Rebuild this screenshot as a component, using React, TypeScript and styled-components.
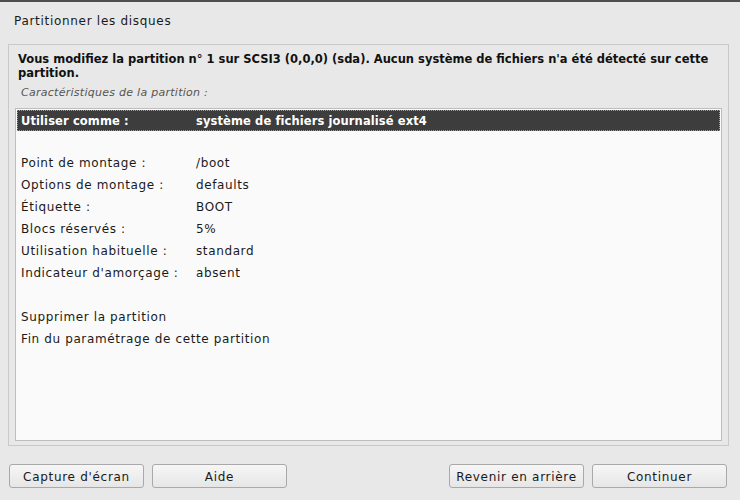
import React from "react";
import styled, { createGlobalStyle } from "styled-components";

const Global = createGlobalStyle`
  html, body { margin: 0; padding: 0; }
  body {
    background: #e8e8e8;
    font-family: "DejaVu Sans", "Liberation Sans", sans-serif;
    font-size: 12px;
    color: #1a1a1a;
  }
`;

const Screen = styled.div`
  width: 740px;
  height: 500px;
  box-sizing: border-box;
  border-top: 2px solid #4e4e4e;
  display: flex;
  flex-direction: column;
  background: #e8e8e8;
`;

const Title = styled.div`
  height: 42px;
  box-sizing: border-box;
  padding: 12px 0 0 14px;
  line-height: 14px;
  letter-spacing: 0.7px;
`;

const Frame = styled.div`
  margin: 0 11px 0 8px;
  height: 402px;
  box-sizing: border-box;
  border: 1px solid #c9c9c9;
  padding: 7px 6px 4px 6px;
  display: flex;
  flex-direction: column;
`;

const Message = styled.div`
  font-weight: bold;
  font-size: 11.5px;
  letter-spacing: 0px;
  line-height: 14px;
  padding-left: 3px;
  color: #111;
`;

const Caption = styled.div`
  font-style: italic;
  font-size: 11px;
  letter-spacing: 0.27px;
  color: #555;
  padding: 6px 0 0 6px;
  line-height: 14px;
  height: 14px;
  margin-bottom: 8px;
`;

const List = styled.div`
  flex: 1;
  background: #fafafa;
  border: 1px solid #bdbdbd;
  padding: 1px;
  display: flex;
  flex-direction: column;
`;

const Row = styled.div<{ $selected?: boolean; $h?: number }>`
  height: ${(p) => p.$h ?? 22}px;
  flex: none;
  box-sizing: border-box;
  display: flex;
  align-items: center;
  padding-left: 3px;
  background: ${(p) => (p.$selected ? "#3d3d3d" : "transparent")};
  color: ${(p) => (p.$selected ? "#ffffff" : "#1a1a1a")};
  font-weight: ${(p) => (p.$selected ? "bold" : "normal")};
  font-size: ${(p) => (p.$selected ? "11.5px" : "12px")};
  letter-spacing: ${(p) => (p.$selected ? "0.1px" : "0.62px")};
  border: 1px dotted ${(p) => (p.$selected ? "#9a9a9a" : "transparent")};
`;

const Label = styled.span`
  width: 175px;
  flex: none;
`;

const Value = styled.span``;

const ButtonBar = styled.div`
  display: flex;
  align-items: center;
  padding: 18px 13px 0 9px;
  gap: 8px;
`;

const Spacer = styled.div`
  flex: 1;
`;

const Button = styled.button`
  width: 135px;
  height: 24px;
  box-sizing: border-box;
  border: 1px solid #a9a9a9;
  border-radius: 3px;
  background: linear-gradient(#f6f6f6, #e6e6e6);
  font-family: "DejaVu Sans", "Liberation Sans", sans-serif;
  font-size: 12px;
  color: #1a1a1a;
  padding: 1px 0 0 0;
  letter-spacing: 0.7px;
`;

const rows: Array<[string, string] | null> = [
  null,
  ["Point de montage :", "/boot"],
  ["Options de montage :", "defaults"],
  ["Étiquette :", "BOOT"],
  ["Blocs réservés :", "5%"],
  ["Utilisation habituelle :", "standard"],
  ["Indicateur d'amorçage :", "absent"],
  null,
];

export default function App() {
  return (
    <>
      <Global />
      <Screen>
        <Title>Partitionner les disques</Title>
        <Frame>
          <Message>
            Vous modifiez la partition n° 1 sur SCSI3 (0,0,0) (sda). Aucun système de fichiers n'a été détecté sur cette partition.
          </Message>
          <Caption>Caractéristiques de la partition :</Caption>
          <List>
            <Row $selected $h={21}>
              <Label>Utiliser comme :</Label>
              <Value>système de fichiers journalisé ext4</Value>
            </Row>
            {rows.map((r, i) =>
              r ? (
                <Row key={i}>
                  <Label>{r[0]}</Label>
                  <Value>{r[1]}</Value>
                </Row>
              ) : (
                <Row key={i} $h={i === 0 ? 21 : 22} />
              )
            )}
            <Row>Supprimer la partition</Row>
            <Row>Fin du paramétrage de cette partition</Row>
          </List>
        </Frame>
        <ButtonBar>
          <Button>Capture d'écran</Button>
          <Button>Aide</Button>
          <Spacer />
          <Button>Revenir en arrière</Button>
          <Button>Continuer</Button>
        </ButtonBar>
      </Screen>
    </>
  );
}
